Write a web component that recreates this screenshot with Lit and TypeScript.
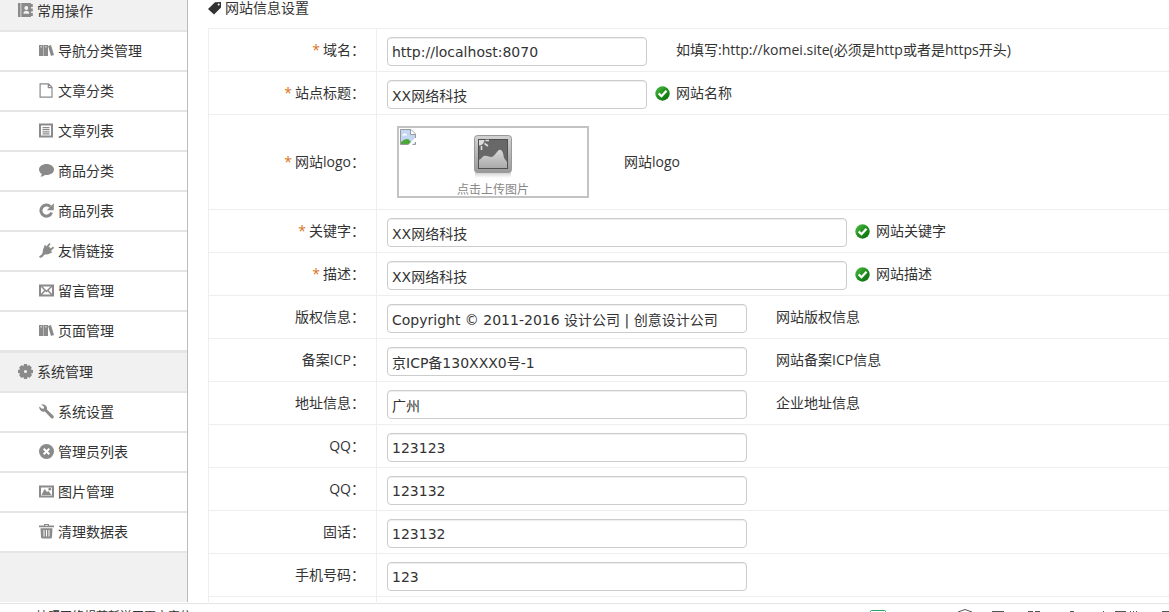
import { LitElement, html, svg, css, nothing, TemplateResult } from "lit";
import { customElement, property } from "lit/decorators.js";

const glyphs: Record<string, TemplateResult> = {
  book: svg`<path fill-rule="evenodd" d="M0 0H2.500V14H0ZM3.300 0H13V14H3.300ZM8.300 3A2 2 0 1 0 8.300 7A2 2 0 1 0 8.300 3ZM5.500 10.800H11.200V9.500Q10.500 7.700 8.300 7.700T5.500 9.500Z"/><path d="M13 1h1.800v3h-1.800zM13 5.500h1.800v3h-1.800zM13 10h1.800v3h-1.800z"/>`,
  shelf: svg`<path fill-rule="evenodd" d="M0 2H4.300V13H0ZM1.200 3.500V4.300H3.100V3.500ZM4.700 2H9V13H4.700ZM6 3.500V4.300H7.800V3.500ZM9 3L12 2L15 12L12 13Z"/>`,
  file: svg`<path fill="none" stroke="currentColor" stroke-width="1.200" d="M1.100 .8H9.500L13 4.300V14.200H1.100ZM9.300 1V4.600H13"/>`,
  list: svg`<path fill-rule="evenodd" d="M0 .5H14V14.500H0ZM2 2.500V12.500H12V2.500ZM3.500 4H10.500V5.200H3.500ZM3.500 6.100H10.500V7.300H3.500ZM3.500 8.200H10.500V9.400H3.500ZM3.500 10.300H10.500V11.500H3.500Z"/>`,
  comment: svg`<path d="M7.500 1C3.400 1 0 3.300 0 6.600c0 1.900 1.100 3.500 2.800 4.500-.2 1.200-.8 2-1.500 2.700 2-.1 3.500-.8 4.500-1.800.5.100 1.100.100 1.700.100 4.100 0 7.500-2.300 7.500-5.500S11.600 1 7.500 1Z"/>`,
  reload: svg`<path fill="none" stroke="currentColor" stroke-width="3" d="M12.600 9.500A5.500 5.500 0 1 1 11.400 3.800"/><path d="M14.800 .3V7.300H7.800Z"/>`,
  plug: svg`<path d="M6 3L12 9.500Q9.500 12 6.500 11.300L4.500 12.500Q3.500 15 1 14.800L0 13.500Q.5 12.600 2.300 12L3.800 9.500Q3.200 5.500 6 3Z"/><path stroke="currentColor" stroke-width="1.700" d="M7.500 4.500L11 .7M10.800 8L14.500 4.200M5.500 2.500L12.500 9.800M8 2.800L12.500 7.300"/>`,
  mail: svg`<path fill-rule="evenodd" d="M0 1.500H15V13.500H0ZM2 3.500V11.500H13V3.500Z"/><path fill="none" stroke="currentColor" stroke-width="1.500" d="M2 3L7.500 8.500L13 3M2 12L6 7.500M13 12L9 7.500"/>`,
  gear: svg`<path fill-rule="evenodd" d="M6 0H9L9.400 2L11.200 .9L13.700 3.400L12.900 5.500L15 6V9L13 9.500L14 11.300L11.600 13.800L9.500 12.900L9 15H6L5.500 13L3.500 14L1.200 11.600L2.100 9.500L0 9V6L2 5.500L1.100 3.500L3.500 1.200L5.500 2.100ZM7.500 5.900A1.600 1.600 0 1 0 7.500 9.100A1.600 1.600 0 1 0 7.500 5.900Z"/>`,
  wrench: svg`<path fill-rule="evenodd" d="M2.200 .4Q5 -.4 7 1.700Q8.500 3.400 7.900 5.600L14.400 11.800Q15.300 13 14.300 14Q13.200 15 12 14L5.900 7.600Q3.400 8.200 1.600 6.500Q-.2 4.500 .4 2.400L3 4.800L4.900 4.500L5 2.800Z"/>`,
  cross: svg`<circle cx="7.500" cy="7.500" r="7.500"/><path stroke="#fff" stroke-width="2" d="M4.700 4.700L10.300 10.300M10.300 4.700L4.700 10.300"/>`,
  picture: svg`<path fill-rule="evenodd" d="M0 1.500H15V13.500H0ZM2 3.500V11.500H13V3.500Z"/><path d="M2.500 11L5.500 5L8 8L9.500 7L12.500 11Z"/><circle cx="10.800" cy="5.200" r="1.400"/>`,
  trash: svg`<path fill-rule="evenodd" d="M5 0H10V1.500H15V3.300H0V1.500H5ZM6.200 .9V1.700H8.800V.9ZM1.500 4.300H13.500L13 13Q12.900 14.500 11.500 14.500H3.500Q2.100 14.500 2 13ZM4.500 6V12.500H5.500V6ZM7 6V12.500H8V6ZM9.500 6V12.500H10.500V6Z"/>`,
  tag: svg`<path fill-rule="evenodd" d="M13 1V6.500L6 13.500L0 8L7 1.200ZM10.700 2.400A1 1 0 1 0 10.700 4.400A1 1 0 1 0 10.700 2.400Z"/>`,
};

@customElement("line-icon")
export class LineIcon extends LitElement {
  @property() name = "";
  static styles = css`
    :host { display: block; width: 15px; height: 15px; flex: none; }
    .glyph { display: block; width: 15px; height: 15px; fill: currentColor; }
  `;
  render() {
    return html`<svg class="glyph" viewBox="0 0 15 15" aria-hidden="true">${glyphs[this.name]}</svg>`;
  }
}

const menu = [
  {
    icon: "book", title: "常用操作", items: [
      ["shelf", "导航分类管理"], ["file", "文章分类"], ["list", "文章列表"], ["comment", "商品分类"],
      ["reload", "商品列表"], ["plug", "友情链接"], ["mail", "留言管理"], ["shelf", "页面管理"],
    ],
  },
  {
    icon: "gear", title: "系统管理", items: [
      ["wrench", "系统设置"], ["cross", "管理员列表"], ["picture", "图片管理"], ["trash", "清理数据表"],
    ],
  },
];

@customElement("side-menu")
export class SideMenu extends LitElement {
  static styles = css`
    :host { display: block; box-sizing: border-box; overflow: hidden; background: #f1f1f1; border-right: 1px solid #bbb; color: #333; }
    .nav { margin-top: -9px; }
    .title { display: flex; align-items: center; gap: 4px; box-sizing: border-box; height: 41px; margin: 0; padding-left: 18px; border-top: 1px solid #e5e5e5; border-bottom: 2px solid #e5e5e5; font-size: 14px; font-weight: 400; }
    .list { list-style: none; margin: 0; padding: 0; }
    .link { display: flex; align-items: center; gap: 4px; box-sizing: border-box; height: 40px; padding-left: 39px; background: #fff; border-bottom: 2px solid #e5e5e5; color: inherit; text-decoration: none; }
    .icon { color: #8a8a8a; margin-bottom: 2px; }
  `;
  render() {
    return html`<nav class="nav">
      ${menu.map((g) => html`
        <h2 class="title"><line-icon class="icon" name=${g.icon}></line-icon>${g.title}</h2>
        <ul class="list">
          ${g.items.map(([icon, text]) => html`<li><a class="link" href="#"><line-icon class="icon" name=${icon}></line-icon>${text}</a></li>`)}
        </ul>`)}
    </nav>`;
  }
}

interface Field { label: string; value?: string; hint?: string; size?: string; required?: boolean; ok?: boolean; upload?: boolean; }

const fields: Field[] = [
  { label: "域名", value: "http://localhost:8070", hint: "如填写:http://komei.site(必须是http或者是https开头)", size: "short", required: true },
  { label: "站点标题", value: "XX网络科技", hint: "网站名称", size: "short", required: true, ok: true },
  { label: "网站logo", hint: "网站logo", required: true, upload: true },
  { label: "关键字", value: "XX网络科技", hint: "网站关键字", size: "long", required: true, ok: true },
  { label: "描述", value: "XX网络科技", hint: "网站描述", size: "long", required: true, ok: true },
  { label: "版权信息", value: "Copyright © 2011-2016 设计公司 | 创意设计公司", hint: "网站版权信息" },
  { label: "备案ICP", value: "京ICP备130XXX0号-1", hint: "网站备案ICP信息" },
  { label: "地址信息", value: "广州", hint: "企业地址信息" },
  { label: "QQ", value: "123123" },
  { label: "QQ", value: "123132" },
  { label: "固话", value: "123132" },
  { label: "手机号码", value: "123" },
];

@customElement("site-form")
export class SiteForm extends LitElement {
  static styles = css`
    :host { display: block; color: #333; }
    .heading { display: flex; align-items: center; gap: 2px; height: 16px; margin: 0 0 12px; font-size: 14px; font-weight: 400; line-height: 16px; }
    .form { margin: 0; border-top: 1px solid #eee; border-left: 1px solid #eee; }
    .row { display: flex; border-bottom: 1px solid #eee; }
    .name { display: flex; flex: none; align-items: center; justify-content: flex-end; box-sizing: border-box; width: 168px; padding-right: 11px; border-right: 1px solid #eee; }
    .star { color: #d9731a; margin-right: 3px; }
    .cell { display: flex; flex: 1; min-width: 0; min-height: 29px; padding: 8px 10px 5px; }
    .box { box-sizing: border-box; width: 360px; height: 29px; padding: 0 4px; border: 1px solid #ccc; border-radius: 4px; background: #fff; box-shadow: inset 0 1px 1px #eee; color: #333; font: 14px "DejaVu Sans", "Noto Sans CJK SC", sans-serif; }
    .short { width: 260px; }
    .long { width: 460px; }
    .note { display: flex; align-items: center; gap: 6px; height: 26px; padding-left: 8px; white-space: nowrap; }
    .mark { width: 15px; height: 15px; }
    .tall { padding: 11px 20px; align-items: center; }
    .upload { position: relative; display: flex; flex-direction: column; align-items: center; gap: 2px; box-sizing: border-box; width: 192px; height: 72px; padding: 6px 0 0; border: 2px solid #c3c3c3; background: #fff; color: #888; font: inherit; font-size: 12px; line-height: 16px; }
    .broken { position: absolute; left: 1px; top: 1px; }
    .photo { display: block; flex: none; }
    .tall .note { padding-left: 14px; }
  `;
  mark = html`<svg class="mark" viewBox="0 0 15 15" aria-hidden="true">
    <defs><linearGradient id="g" x1="0" y1="0" x2="1" y2="1"><stop offset="0" stop-color="#55c04a"/><stop offset=".5" stop-color="#1f8f1c"/><stop offset="1" stop-color="#0b6a12"/></linearGradient></defs>
    <circle cx="7.5" cy="7.5" r="7.2" fill="url(#g)"/><path d="M3.700 7.400L6.500 10.200L11.500 4.800" fill="none" stroke="#fff" stroke-width="2.300"/></svg>`;
  upload(id: string) {
    return html`<button class="upload" id=${id} type="button">
      <svg class="broken" width="16" height="16" viewBox="0 0 16 16" aria-hidden="true">
        <path d="M.5 .5H11L15.500 5V15.500H.5Z" fill="#c3d7f5"/>
        <path d="M2 6.500Q3 4 5 4.500Q7 4.500 7 6.500Z" fill="#fff"/>
        <path d="M1 15.500V13Q4 10 7 10T12 15.500Z" fill="#4fa63c"/>
        <path d="M8 16L16 8V12L12 16Z" fill="#fff"/>
        <path d="M8.500 15.500H.5V.5H11L15.500 5V9M15.500 13V15.500H12.500" fill="none" stroke="#999"/>
        <path d="M10.500 .5V5.500H15.500" fill="#fff" stroke="#999"/>
      </svg>
      <svg class="photo" width="40" height="46" viewBox="0 0 40 46" aria-hidden="true">
        <defs>
          <linearGradient id="frame" x1="0" y1="0" x2="0" y2="1"><stop offset="0" stop-color="#d2d2d2"/><stop offset="1" stop-color="#999"/></linearGradient>
          <linearGradient id="shade" x1="0" y1="0" x2="0" y2="1"><stop offset="0" stop-color="#ccc"/><stop offset="1" stop-color="#fff"/></linearGradient>
          <linearGradient id="hill" x1="0" y1="0" x2="0" y2="1"><stop offset="0" stop-color="#d8d8d8"/><stop offset="1" stop-color="#aaa"/></linearGradient>
        </defs>
        <rect x="2" y="38" width="36" height="6" fill="url(#shade)"/>
        <rect x="1.500" y="1.500" width="37" height="37" rx="3" fill="url(#frame)" stroke="#999"/>
        <rect x="5.500" y="5.500" width="29" height="29" fill="#686868" stroke="#505050"/>
        <path d="M6 26Q8 25 9.500 23T14 22T19 23Q22 21 24 18T28 16T31 24L34 28V34H6Z" fill="url(#hill)"/>
        <path d="M6 6H11.500A5.500 5.500 0 0 1 6 11.500Z" fill="#ddd"/>
        <path d="M12.500 6.500H16M11.500 9.500L15 12M8.500 12V16" stroke="#ddd" stroke-width="1.600"/>
      </svg>
      点击上传图片</button>`;
  }
  render() {
    return html`
      <h1 class="heading"><line-icon name="tag"></line-icon>网站信息设置</h1>
      <form class="form">
        ${fields.map((f, i) => {
          const id = `f${i}`;
          return html`<div class="row">
            <label class="name" for=${id}>${f.required ? html`<span class="star">*</span>` : nothing}${f.label}：</label>
            <div class="cell ${f.upload ? "tall" : ""}">
              ${f.upload ? this.upload(id) : html`<input class="box ${f.size ?? ""}" id=${id} type="text" .value=${f.value ?? ""}>`}
              ${f.hint ? html`<span class="note">${f.ok ? this.mark : html`<span class="mark"></span>`}<span>${f.hint}</span></span>` : nothing}
            </div>
          </div>`;
        })}
        <div class="row"><div class="name"></div><div class="cell"></div></div>
      </form>`;
  }
}

@customElement("app-root")
export class AppRoot extends LitElement {
  static styles = css`
    :host { display: flex; flex-direction: column; height: 100vh; overflow: hidden; background: #fff; color: #333; font: 14px/20px "Open Sans", "Noto Sans CJK SC", sans-serif; }
    .body { display: flex; flex: 1; min-height: 0; gap: 20px; overflow: hidden; }
    .side { flex: none; width: 188px; }
    .main { flex: 1; min-width: 0; overflow: hidden; }
    .foot { display: flex; justify-content: space-between; flex: none; height: 8px; margin-top: 1px; padding-left: 36px; border-top: 1px solid #e5e5e5; overflow: hidden; font-size: 12px; line-height: 26px; white-space: nowrap; }
    .tools { flex: none; width: 299px; height: 8px; }
  `;
  render() {
    return html`
      <div class="body">
        <side-menu class="side"></side-menu>
        <main class="main"><site-form></site-form></main>
      </div>
      <footer class="foot">
        <span>按照网络规范新送网页文字信</span>
        <svg class="tools" viewBox="0 0 299 8" fill="none" stroke="#555" aria-hidden="true">
          <path d="M.5 8V7.500Q.5 6.500 1.500 6.500H14.500Q15.500 6.500 15.500 7.500V8" stroke="#2f9e63"/>
          <path d="M88 8L95 5.500L102 8M122 7.500H134M158 7.500H163M165 7.500H170M200 7.500H204M233.500 7V8M245 7.500H256M260.500 7V8M263.500 7V8M266.500 7V8M292 7.500H299"/>
        </svg>
      </footer>`;
  }
}
